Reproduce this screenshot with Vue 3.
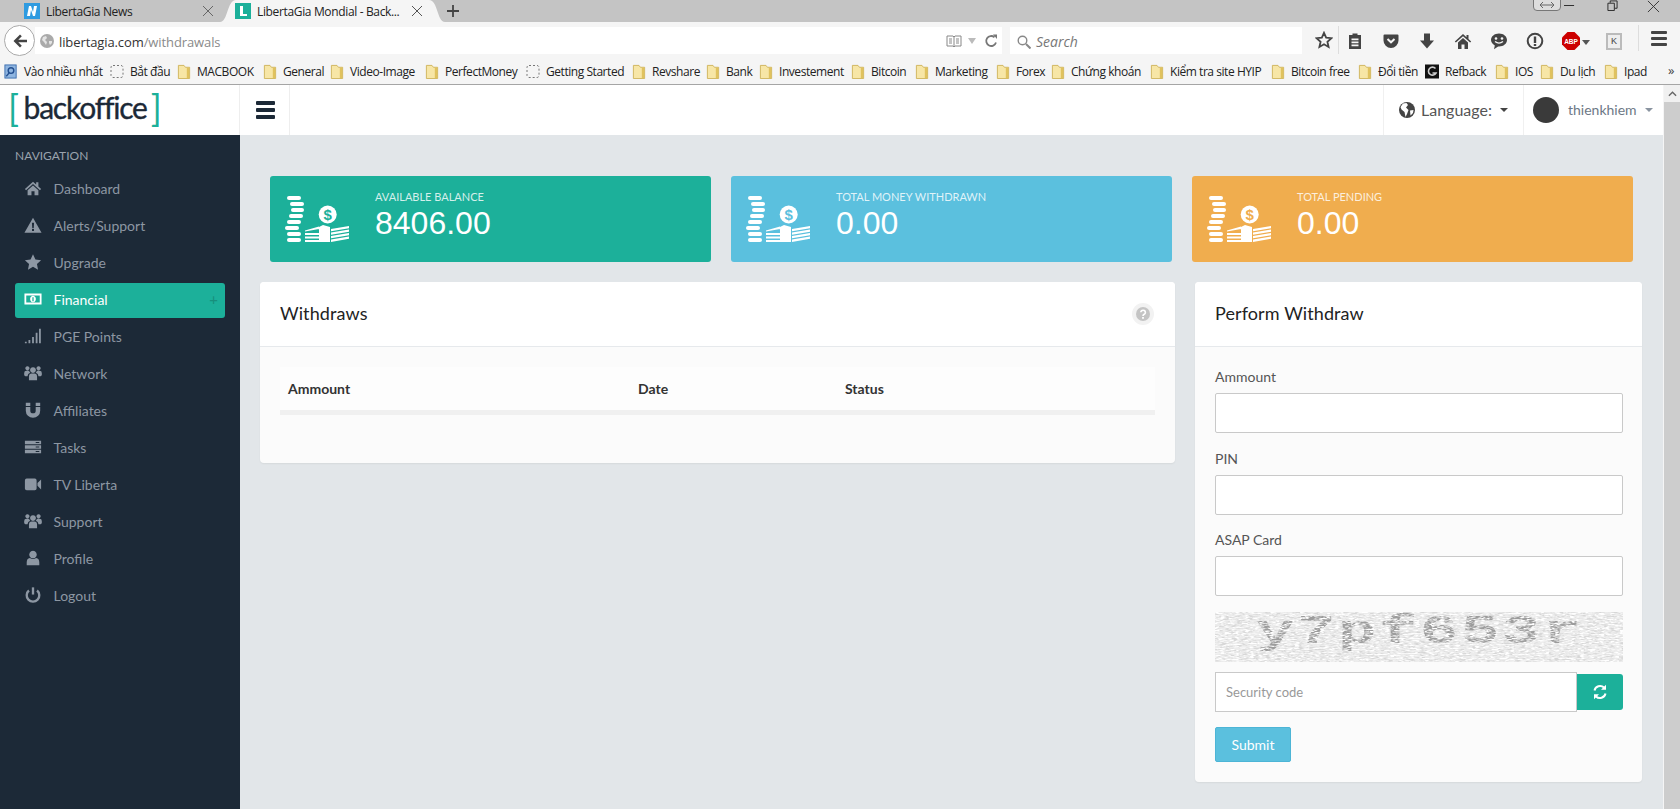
<script setup>
const bookmarks = [
  { t: 'Vào nhiều nhất', w: 106, i: 'most' },
  { t: 'Bắt đầu', w: 67, i: 'dash' },
  { t: 'MACBOOK', w: 86, i: 'f' },
  { t: 'General', w: 67, i: 'f' },
  { t: 'Video-Image', w: 95, i: 'f' },
  { t: 'PerfectMoney', w: 101, i: 'f' },
  { t: 'Getting Started', w: 106, i: 'dash' },
  { t: 'Revshare', w: 74, i: 'f' },
  { t: 'Bank', w: 53, i: 'f' },
  { t: 'Investement', w: 92, i: 'f' },
  { t: 'Bitcoin', w: 64, i: 'f' },
  { t: 'Marketing', w: 81, i: 'f' },
  { t: 'Forex', w: 55, i: 'f' },
  { t: 'Chứng khoán', w: 99, i: 'f' },
  { t: 'Kiểm tra site HYIP', w: 121, i: 'f' },
  { t: 'Bitcoin free', w: 87, i: 'f' },
  { t: 'Đổi tiền', w: 67, i: 'f' },
  { t: 'Refback', w: 70, i: 'g' },
  { t: 'IOS', w: 45, i: 'f' },
  { t: 'Du lịch', w: 64, i: 'f' },
  { t: 'Ipad', w: 50, i: 'f' }
]

const nav = [
  { t: 'Dashboard', d: 'M10 3 1 11l1.3 1.4L10 5.6l7.700 6.800L19 11l-3-2.700V3.500h-2.500v2.600ZM10 7.200l-6 5.200V18h4.300v-4.500h3.400V18H16v-5.600Z' },
  { t: 'Alerts/Support', d: 'M10 2 19.500 18.500H.5ZM8.800 7.500h2.400l-.4 6h-1.600ZM8.900 14.500h2.200v2.200H8.900Z' },
  { t: 'Upgrade', d: 'M10 1.500l2.700 5.700 6.300.8-4.600 4.300 1.200 6.200-5.600-3.100-5.600 3.100 1.200-6.200L1 8l6.300-.8Z' },
  { t: 'Financial', active: true, d: 'M.5 4h19v12H.5ZM2.500 6v8h15V6ZM10 6.300a3.200 3.700 0 1 1-.01 0ZM9.300 8v4.500h1.400V8Z' },
  { t: 'PGE Points', d: 'M1 16.500h2V18H1ZM5 14.500h2V18H5ZM9 11h2v7H9ZM13 6.500h2V18h-2ZM16.700 2h2v16h-2Z' },
  { t: 'Network', d: 'M10 3.500a3.200 3.200 0 1 1-.01 0ZM5.500 18v-4q0-3.500 3-3.500h3q3 0 3 3.500v4ZM3.800 2.500a2.300 2.300 0 1 1-.01 0ZM16.200 2.500a2.300 2.300 0 1 1-.01 0ZM.2 12.500V10q0-2.500 2.500-2.500h3q.3 1.500 1.300 2.300-3 .8-3.100 3.700H1.500ZM19.800 12.500V10q0-2.500-2.500-2.500h-3q-.3 1.500-1.300 2.300 3 .8 3.100 3.700h2.400Z' },
  { t: 'Affiliates', d: 'M2 2h5v3.500H2ZM13 2h5v3.500h-5ZM2 6.700h5v4a3 3 0 0 0 6 0v-4h5v4a8 8 0 0 1-16 0Z' },
  { t: 'Tasks', d: 'M1 3h18v4H1ZM1 8h18v4H1ZM1 13h18v4H1ZM13 9.500v1h4v-1ZM13 4.500v1h4v-1ZM13 14.500v1h4v-1Z' },
  { t: 'TV Liberta', d: 'M1 6a2 2 0 0 1 2-2h9a2 2 0 0 1 2 2v9a2 2 0 0 1-2 2H3a2 2 0 0 1-2-2ZM15 9l4-4v11l-4-4Z' },
  { t: 'Support', d: 'M10 3.500a3.200 3.200 0 1 1-.01 0ZM5.500 18v-4q0-3.500 3-3.500h3q3 0 3 3.500v4ZM3.800 2.500a2.300 2.300 0 1 1-.01 0ZM16.200 2.500a2.300 2.300 0 1 1-.01 0ZM.2 12.500V10q0-2.500 2.500-2.500h3q.3 1.500 1.300 2.300-3 .8-3.100 3.700H1.500ZM19.800 12.500V10q0-2.500-2.500-2.500h-3q-.3 1.500-1.300 2.300 3 .8 3.100 3.700h2.400Z' },
  { t: 'Profile', d: 'M10 2a4.200 4.200 0 1 1-.01 0ZM3 18v-3q0-4.500 3.500-5q3.500 2 7 0q3.500.5 3.500 5v3Z' },
  { t: 'Logout', power: true }
]

const stats = [
  { label: 'AVAILABLE BALANCE', value: '8406.00', cls: 'teal' },
  { label: 'TOTAL MONEY WITHDRAWN', value: '0.00', cls: 'blue' },
  { label: 'TOTAL PENDING', value: '0.00', cls: 'orange' }
]

const coins = [
  [2, 14], [5, 14], [6, 13], [4, 14], [2, 14], [0, 14], [2, 14], [2, 14]
]

const fields = ['Ammount', 'PIN', 'ASAP Card']
</script>

<template>
  <div class="page">
    <div class="tabs">
      <div class="tab">
        <svg class="fav" viewBox="0 0 16 16"><rect width="16" height="16" fill="#2f9be0"/><path d="M3 13 5 3h2l2 6 1-6h3l-2 10H9L7 7l-1 6Z" fill="#fff"/></svg>
        <span class="tab-title">LibertaGia News</span>
        <svg class="tab-x" viewBox="0 0 12 12"><path d="M1 1l10 10M11 1 1 11" stroke="#666" fill="none"/></svg>
      </div>
      <div class="tab active">
        <svg class="fav" viewBox="0 0 16 16"><rect width="16" height="16" fill="#1cb09a"/><path d="M5 3h3v8h4v2H5Z" fill="#fff"/></svg>
        <span class="tab-title">LibertaGia Mondial - Back...</span>
        <svg class="tab-x" viewBox="0 0 12 12"><path d="M1 1l10 10M11 1 1 11" stroke="#555" fill="none"/></svg>
      </div>
      <svg class="plus" viewBox="0 0 14 14"><path d="M7 1v12M1 7h12" stroke="#444" stroke-width="1.800" fill="none"/></svg>
      <div class="win">
        <span class="tray"><svg viewBox="0 0 16 8" width="16" height="8"><path d="M1 4h14M4 1 1 4l3 3M12 1l3 3-3 3" stroke="#666" fill="none"/></svg></span>
        <svg class="w-min" viewBox="0 0 12 12"><path d="M0 6h11" stroke="#222" fill="none"/></svg>
        <svg class="w-max" viewBox="0 0 12 12"><path d="M1 3.500h7v8H1ZM3.500 3V1h7.500v8H8.500" stroke="#222" fill="none"/></svg>
        <svg class="w-close" viewBox="0 0 14 14"><path d="M1 1l12 12M13 1 1 13" stroke="#333" fill="none"/></svg>
      </div>
    </div>

    <div class="toolbar">
      <div class="back"><svg viewBox="0 0 18 18" width="18" height="18"><path d="M9 2.500 2.500 9 9 15.500l1.800-1.800L7.300 10.300H16V7.700H7.300l3.500-3.400Z" fill="#444"/></svg></div>
      <div class="address">
        <svg class="globe-s" viewBox="0 0 14 14"><circle cx="7" cy="7" r="7" fill="#aaa"/><path d="M3 3l3-1 1 2-2 2 2 2-1 3-2-3-2-2ZM9 7l3 0 0 2-2 2-1-2Z" fill="#e4e4e4"/></svg>
        <span class="url"><span class="host">libertagia.com</span>/withdrawals</span>
        <svg class="reader" viewBox="0 0 16 14"><path d="M1 2h6l1 1 1-1h6v10H9l-1 1-1-1H1ZM8 3v9M3 5h3M3 7h3M3 9h3M10 5h3M10 7h3M10 9h3" stroke="#888" fill="none"/></svg>
        <svg class="drop" viewBox="0 0 8 6"><path d="M0 0h8L4 6Z" fill="#bbb"/></svg>
        <svg class="reload" viewBox="0 0 14 14"><path d="M12 8.500A5 5 0 1 1 10.500 3.200" stroke="#777" stroke-width="1.800" fill="none"/><path d="M9 .5h4v4.500Z" fill="#777"/></svg>
      </div>
      <div class="search">
        <svg viewBox="0 0 14 14" width="14" height="14"><circle cx="5.500" cy="5.500" r="4.300" stroke="#888" stroke-width="1.400" fill="none"/><path d="M9 9l4.500 4.500" stroke="#888" stroke-width="2" fill="none"/></svg>
        <span>Search</span>
      </div>
      <div class="star"><svg viewBox="0 0 20 20" width="18" height="18"><path d="M10 2l2.400 5.400 5.800.6-4.400 3.900 1.300 5.800L10 14.700l-5.100 3 1.300-5.800L1.800 8l5.800-.6Z" stroke="#444" stroke-width="2" fill="none"/></svg></div>
      <div class="tool first"><svg viewBox="0 0 18 18" width="18" height="18"><path d="M3 3h3.500V1.500h5V3H15v14H3ZM5.500 6.500v1.800h7V6.500ZM5.500 9.500v1.800h7V9.500ZM5.500 12.500v1.800h7v-1.800Z" fill="#444" fill-rule="evenodd"/></svg></div>
      <div class="tool"><svg viewBox="0 0 18 18" width="18" height="18"><path d="M2.500 2.500h13a1 1 0 0 1 1 1v5a7.500 7.500 0 0 1-15 0v-5a1 1 0 0 1 1-1Z" fill="#444"/><path d="M5.500 7l3.500 3.300L12.500 7" stroke="#f5f5f5" stroke-width="2" fill="none"/></svg></div>
      <div class="tool"><svg viewBox="0 0 18 18" width="18" height="18"><path d="M6 1.500h6v7h4L9 16.500 2 8.500h4Z" fill="#444"/></svg></div>
      <div class="tool"><svg viewBox="0 0 18 18" width="18" height="18"><path d="M9 2 .8 9.500l1.100 1L9 4.300l7.100 6.200 1.100-1-2.700-2.500V3h-2v2.200ZM9 6 4 10.500V17h3.500v-4.500h3V17H14v-6.500Z" fill="#444"/></svg></div>
      <div class="tool"><svg viewBox="0 0 18 18" width="18" height="18"><path d="M9 1.500c4.500 0 8 2.900 8 6.500s-3.500 6.500-8 6.500l-.9 0L4 17.200l.8-3.800C2.500 12.200 1 10.200 1 8c0-3.600 3.500-6.500 8-6.500Z" fill="#444"/><circle cx="6" cy="6.500" r="1.300" fill="#f5f5f5"/><circle cx="12" cy="6.500" r="1.300" fill="#f5f5f5"/><path d="M5 9.500q4 3.300 8 0" stroke="#f5f5f5" stroke-width="1.400" fill="none"/></svg></div>
      <div class="tool"><svg viewBox="0 0 18 18" width="18" height="18"><circle cx="9" cy="9" r="7.300" stroke="#444" stroke-width="2" fill="none"/><path d="M7.800 4.500h2.400v6.500H7.800ZM7.800 12h2.400v2H7.800Z" fill="#444"/></svg></div>
      <div class="tool abp"><svg viewBox="0 0 18 18" width="18" height="18"><path d="M5.500 0h7L18 5.500v7L12.500 18h-7L0 12.500v-7Z" fill="#c00"/><text x="9" y="11.600" text-anchor="middle" class="abp-t">ABP</text></svg><svg class="abp-c" viewBox="0 0 8 5"><path d="M0 0h8L4 5Z" fill="#555"/></svg></div>
      <div class="tool k"><span class="kbox">K</span></div>
      <div class="burger"><span></span><span></span><span></span></div>
    </div>

    <div class="bookmarks">
      <div v-for="b in bookmarks" :key="b.t" class="bm" :style="{ width: b.w + 'px' }">
        <svg v-if="b.i === 'f'" class="bi" viewBox="0 0 14 16"><path d="M1 1.500h6l1.500 2H13v12H1Z" fill="#f7e6a6" stroke="#cfb45c"/><path d="M10 4h2.500v11H10Z" fill="#e0c25e"/></svg>
        <svg v-else-if="b.i === 'dash'" class="bi" viewBox="0 0 14 14"><rect x="1" y="1" width="12" height="12" rx="2" fill="none" stroke="#777" stroke-dasharray="2 2"/></svg>
        <svg v-else-if="b.i === 'most'" class="bi" viewBox="0 0 14 16"><rect x=".5" y="1" width="12" height="14" fill="#8fb5e0" stroke="#3d6fb0"/><circle cx="7" cy="7" r="3" fill="none" stroke="#234f90" stroke-width="1.500"/><path d="M5 9.500 2 13" stroke="#234f90" stroke-width="1.500"/></svg>
        <svg v-else class="bi" viewBox="0 0 14 14"><rect width="14" height="14" fill="#111"/><path d="M10.500 4a4 4 0 1 0 .5 4.500H7.500" stroke="#ccc" stroke-width="1.600" fill="none"/></svg>
        <span>{{ b.t }}</span>
      </div>
      <span class="more">»</span>
    </div>

    <div class="viewport">
      <div class="site">
        <div class="logo"><span class="br">[</span><span class="lg">backoffice</span><span class="br">]</span></div>
        <header class="top">
          <div class="menu-btn"><span></span><span></span><span></span></div>
          <div class="spacer"></div>
          <div class="lang">
            <svg viewBox="0 0 16 16" width="16" height="16"><circle cx="8" cy="8" r="8" fill="#444"/><path d="M4 1.500 7.500 1 9 3 7 5.500 9.500 8 8 12 6.500 15 5.500 10 2.500 7.500 1.500 5ZM11 8.500l3.500-.5-.5 3-2.500 2.500Z" fill="#fff"/></svg>
            <span>Language:</span>
            <i class="caret dark"></i>
          </div>
          <div class="user">
            <span class="avatar"></span>
            <span class="uname">thienkhiem</span>
            <i class="caret"></i>
          </div>
        </header>
        <aside class="side">
          <div class="nav-title">NAVIGATION</div>
          <ul class="nav">
            <li v-for="n in nav" :key="n.t" :class="{ on: n.active }">
              <svg class="ni" viewBox="0 0 20 20">
                <g v-if="n.power" fill="none" stroke="currentColor" stroke-width="2.600">
                  <path d="M10 1.500v8"/><path d="M5.500 5a7 7 0 1 0 9 0"/>
                </g>
                <path v-else :d="n.d" fill="currentColor" fill-rule="evenodd"/>
              </svg>
              <span>{{ n.t }}</span>
              <em v-if="n.active">+</em>
            </li>
          </ul>
        </aside>
        <main class="content">
          <div class="stats">
            <div v-for="s in stats" :key="s.label" class="stat" :class="s.cls">
              <svg class="coin" viewBox="0 0 65 46">
                <rect v-for="(c, i) in coins" :key="i" :x="c[0]" :y="i * 6" :width="c[1]" height="4" rx="2" fill="#fff"/>
                <circle cx="42.700" cy="18.500" r="9" fill="#fff"/>
                <text x="42.700" y="23.500" text-anchor="middle" class="dollar" :class="s.cls">$</text>
                <path d="M20 34.500l14-4v2.500l-14 2.500ZM20 37h14v2H20ZM20 40.500h14v2H20ZM20 44h14v2H20ZM34 31l4-2 7 2v15H34ZM46 33l18-3v2.200l-18 3ZM46 36.500l18-3v2.200l-18 3ZM46 40l18-3v2.200l-18 3ZM46 43.500l18-3v2.200L46 46Z" fill="#fff"/>
              </svg>
              <div class="stat-text">
                <div class="stat-label">{{ s.label }}</div>
                <div class="stat-value">{{ s.value }}</div>
              </div>
            </div>
          </div>
          <div class="row">
            <section class="panel left">
              <div class="panel-head">
                <h3>Withdraws</h3>
                <span class="help"><svg viewBox="0 0 14 14" width="14" height="14"><circle cx="7" cy="7" r="7" fill="#c4c4c4"/><path d="M4.800 5.300a2.300 2.100 0 1 1 3.400 1.900C7.300 7.700 7 8 7 9" stroke="#fff" stroke-width="1.600" fill="none"/><path d="M6.100 10h1.800v1.700H6.100Z" fill="#fff"/></svg></span>
              </div>
              <div class="panel-body list">
                <table>
                  <thead>
                    <tr><th class="c1">Ammount</th><th class="c2">Date</th><th>Status</th></tr>
                  </thead>
                </table>
              </div>
            </section>
            <section class="panel right">
              <div class="panel-head"><h3>Perform Withdraw</h3></div>
              <form class="panel-body form" @submit.prevent>
                <div v-for="f in fields" :key="f" class="field">
                  <label>{{ f }}</label>
                  <input type="text" />
                </div>
                <svg class="captcha" viewBox="0 0 408 50" preserveAspectRatio="none">
                  <defs>
                    <filter id="nz" x="0" y="0" width="100%" height="100%">
                      <feTurbulence type="fractalNoise" baseFrequency="0.18 0.7" numOctaves="2" seed="4"/>
                      <feColorMatrix type="matrix" values="0 0 0 0 .68  0 0 0 0 .68  0 0 0 0 .68  3 3 0 0 -2.800"/>
                    </filter>
                    <filter id="nw" x="0" y="0" width="100%" height="100%">
                      <feTurbulence type="fractalNoise" baseFrequency="0.2 0.8" numOctaves="2" seed="11"/>
                      <feColorMatrix type="matrix" values="0 0 0 0 1  0 0 0 0 1  0 0 0 0 1  3 3 0 0 -2.900"/>
                    </filter>
                  </defs>
                  <rect width="408" height="50" fill="#ececec"/>
                  <text transform="translate(41 31) scale(1.600 1)" class="cap-t">y7pf653r</text>
                  <rect width="408" height="50" filter="url(#nz)"/>
                  <rect width="408" height="50" filter="url(#nw)"/>
                </svg>
                <div class="code">
                  <input type="text" placeholder="Security code" />
                  <button type="button" class="refresh"><svg viewBox="0 0 16 16" width="16" height="16"><path d="M2.500 6.500A5.700 5.700 0 0 1 12 3.500M13.500 9.500A5.700 5.700 0 0 1 4 12.500" stroke="#fff" stroke-width="2" fill="none"/><path d="M14 .8v5h-5ZM2 15.200v-5h5Z" fill="#fff"/></svg></button>
                </div>
                <button type="submit" class="submit">Submit</button>
              </form>
            </section>
          </div>
        </main>
      </div>
      <div class="scrollbar">
        <div class="sb-up"><svg viewBox="0 0 10 6" width="9" height="6"><path d="M1 5l4-4 4 4" stroke="#666" stroke-width="1.500" fill="none"/></svg></div>
        <div class="sb-thumb"></div>
      </div>
    </div>
  </div>
</template>

<style>
html, body { margin: 0; padding: 0; overflow: hidden; }
</style>

<style scoped>
.page { width: 1680px; height: 809px; display: flex; flex-direction: column; overflow: hidden; font-family: Lato, sans-serif; background: #f5f5f5; }

/* browser chrome */
.tabs { height: 22px; background: #c4c4c4; display: flex; position: relative; flex: none; font-family: "Open Sans", sans-serif; font-size: 12px; color: #222; }
.tab { display: flex; align-items: center; height: 22px; flex: none; }
.tab:first-child { width: 220px; padding-left: 24px; box-sizing: border-box; }
.tab.active { width: 225px; padding-left: 15px; box-sizing: border-box; background: #f5f5f5; clip-path: path('M0 22C8 22 7 0 16 0H209C218 0 217 22 225 22Z'); }
.fav { width: 16px; height: 16px; flex: none; }
.tab-title { margin-left: 6px; letter-spacing: -.35px; white-space: nowrap; flex: 1; }
.tab-x { width: 12px; height: 12px; margin-right: 6px; flex: none; }
.tab.active .tab-x { margin-right: 22px; }
.plus { width: 14px; height: 14px; margin: 4px 0 0 1px; flex: none; }
.win { margin-left: auto; position: relative; width: 150px; }
.tray { position: absolute; left: 3px; top: -1px; width: 28px; height: 12px; box-sizing: border-box; border: 1px solid #777; border-radius: 0 0 4px 4px; background: #ddd; display: flex; align-items: center; justify-content: center; }
.w-min, .w-max, .w-close { position: absolute; top: 0; }
.w-min { left: 34px; width: 11px; height: 11px; }
.w-max { left: 77px; width: 11px; height: 11px; }
.w-close { left: 117px; width: 13px; height: 13px; }

.toolbar { height: 32px; display: flex; flex: none; background: #f5f5f5; position: relative; }
.back { width: 31px; height: 31px; margin: 3px 0 0 4px; box-sizing: border-box; border: 1px solid #aaa; border-radius: 50%; background: #fff; display: flex; align-items: center; justify-content: center; position: relative; z-index: 1; flex: none; }
.address { width: 967px; height: 27px; margin: 5px 0 0 0; background: #fff; display: flex; align-items: center; box-sizing: border-box; padding-left: 4px; flex: none; font-family: "Open Sans", sans-serif; }
.globe-s { width: 14px; height: 14px; margin-left: 1px; flex: none; }
.url { margin-left: 5px; font-size: 13px; line-height: 18px; padding-top: 2px; color: #8a8a8a; letter-spacing: -.1px; flex: 1; }
.host { color: #333; }
.reader { width: 16px; height: 14px; flex: none; }
.drop { width: 8px; height: 6px; margin: 0 8px 0 6px; flex: none; }
.reload { width: 14px; height: 14px; margin-right: 4px; flex: none; }
.search { width: 292px; height: 27px; margin: 5px 0 0 8px; background: #fff; display: flex; align-items: center; gap: 5px; padding: 2px 0 0 7px; box-sizing: border-box; color: #777; font: italic 14px "Open Sans", sans-serif; flex: none; }
.star { width: 30px; height: 28px; margin: 4px 0 0 7px; display: flex; align-items: center; justify-content: center; box-sizing: border-box; border-right: 1px solid #ddd; flex: none; }
.tool { width: 36px; height: 32px; margin-top: 3px; display: flex; align-items: center; justify-content: center; flex: none; position: relative; }
.tool.first { margin-left: -2px; }
.abp-t { font: bold 6.500px "Liberation Sans", sans-serif; fill: #fff; }
.abp-c { position: absolute; right: -1px; top: 15px; width: 8px; height: 5px; }
.tool.k { margin-left: 7px; }
.kbox { width: 16px; height: 17px; box-sizing: border-box; border: 2px solid #bbb; background: #eee; font: 9px "Liberation Sans", sans-serif; color: #444; display: flex; align-items: center; justify-content: center; }
.burger { width: 40px; margin: 3px 0 3px 6px; border-left: 1px solid #ddd; box-sizing: border-box; display: flex; flex-direction: column; justify-content: center; align-items: center; gap: 3px; flex: none; }
.burger span { width: 16px; height: 3px; background: #444; border-radius: 1px; }

.bookmarks { height: 31px; box-sizing: border-box; padding: 5px 0 0 4px; border-bottom: 1px solid #a5a5a5; background: #f5f5f5; display: flex; align-items: center; flex: none; font: 12px "Open Sans", sans-serif; color: #222; position: relative; }
.bm { display: flex; align-items: center; flex: none; white-space: nowrap; letter-spacing: -.45px; }
.bm span { margin-left: 6px; }
.bi { width: 14px; height: 15px; flex: none; }
.more { position: absolute; left: 1668px; top: 7px; font-size: 13px; color: #444; }

/* page */
.viewport { flex: 1; display: flex; min-height: 0; }
.site { width: 1663px; margin-right: 1px; background: #e2e6e9; display: grid; grid-template-columns: 240px 1fr; grid-template-rows: 50px 1fr; }
.logo { background: #fff; display: flex; align-items: center; padding-left: 8px; box-sizing: border-box; border-right: 1px solid #eee; }
.lg { font-size: 30px; color: #1c2937; letter-spacing: -1.200px; margin: 0 4px 0 4.500px; position: relative; top: -3px; line-height: 50px; -webkit-text-stroke: .35px #1c2937; }
.br { font-size: 36px; font-weight: 400; color: #1cb09a; position: relative; top: -2px; line-height: 50px; }
.top { background: #fff; display: flex; align-items: stretch; }
.menu-btn { width: 50px; box-sizing: border-box; border-right: 1px solid #eee; display: flex; flex-direction: column; justify-content: center; align-items: center; gap: 3px; padding-left: 1px; }
.menu-btn span { width: 19px; height: 4px; background: #1c2937; border-radius: 1px; }
.spacer { flex: 1; }
.lang { width: 140px; box-sizing: border-box; border-left: 1px solid #f0f0f0; display: flex; align-items: center; padding-left: 15px; font-size: 16px; color: #555; }
.lang span { margin-left: 6px; padding-bottom: 2px; }
.caret { display: inline-block; width: 0; height: 0; border: 4px solid transparent; border-top-color: #8a94a0; border-bottom: 0; margin-left: 8px; }
.caret.dark { border-top-color: #444; margin-left: 8px; }
.user { width: 140px; box-sizing: border-box; border-left: 1px solid #f0f0f0; display: flex; align-items: center; padding-left: 9px; font-size: 14px; color: #6d7885; }
.avatar { width: 26px; height: 26px; border-radius: 50%; background: #3a3a3a; }
.uname { margin-left: 9px; padding-bottom: 2px; }

.side { background: #1c2937; color: #8d97a3; }
.nav-title { font-size: 12px; color: #9aa3ad; margin: 13px 0 0 15px; line-height: 15px; }
.nav { list-style: none; margin: 9px 0 0 15px; padding: 0; width: 210px; }
.nav li { height: 35px; margin-bottom: 2px; display: flex; align-items: center; border-radius: 3px; padding: 0 0 3px 9px; font-size: 14px; box-sizing: border-box; position: relative; }
.nav li.on { background: #1cb09a; color: #fff; }
.nav li.on em { position: absolute; right: 7px; top: 7px; font-style: normal; font-size: 15px; color: #178f7c; }
.ni { width: 18px; height: 18px; flex: none; }
.nav li span { margin-left: 11.500px; }

.content { min-width: 0; }
.stats { display: flex; gap: 20px; padding: 41px 0 0 30px; }
.stat { width: 441px; height: 86px; border-radius: 3px; display: flex; color: #fff; box-sizing: border-box; padding: 20px 0 0 15px; flex: none; }
.teal { background: #1cb09a; }
.blue { background: #5bc0de; }
.orange { background: #f0ad4e; }
.coin { width: 65px; height: 46px; flex: none; }
.dollar { font: bold 15px "Liberation Sans", sans-serif; background: none; }
.dollar.teal { fill: #1cb09a; }
.dollar.blue { fill: #5bc0de; }
.dollar.orange { fill: #f0ad4e; }
.stat-text { margin-left: 25px; margin-top: -7px; }
.stat-label { font-size: 11px; line-height: 16px; color: rgba(255, 255, 255, .82); }
.stat-value { font: 32px/36px "Liberation Sans", sans-serif; }

.row { display: flex; gap: 20px; padding: 20px 0 0 20px; align-items: flex-start; }
.panel { background: #fbfbfb; border-radius: 4px; box-shadow: 0 1px 2px rgba(0, 0, 0, .06); box-sizing: border-box; flex: none; }
.panel.left { width: 915px; height: 181px; }
.panel.right { width: 447px; height: 500px; }
.panel-head { height: 65px; box-sizing: border-box; background: #fff; border-bottom: 1px solid #e6e9ec; border-radius: 4px 4px 0 0; display: flex; align-items: center; justify-content: space-between; padding: 0 20px; }
h3 { margin: 0 0 3px; font-size: 18px; font-weight: 400; color: #222; letter-spacing: .1px; }
.help { width: 22px; height: 22px; border-radius: 50%; background: #f2f2f2; display: flex; align-items: center; justify-content: center; margin-right: 1px; }
.list { padding: 20px 20px 0; }
table { width: 100%; border-collapse: collapse; background: #fdfdfd; }
th { height: 43px; padding: 0 8px; text-align: left; font-size: 14px; font-weight: 700; color: #333; border-bottom: 5px solid #f0f0f0; }
th.c1 { width: 334px; }
th.c2 { width: 191px; }

.form { padding: 20px 19px 0 20px; display: flex; flex-direction: column; }
.field { display: flex; flex-direction: column; margin-bottom: 15.500px; }
.field label { font-size: 14px; line-height: 20px; color: #555; margin-bottom: 6px; }
input { height: 40px; box-sizing: border-box; border: 1px solid #c9c9c9; border-radius: 2px; background: #fff; outline: none; font: 13px Lato, sans-serif; padding: 0 10px; }
input::placeholder { color: #999; opacity: 1; }
.captcha { width: 408px; height: 50px; display: block; overflow: visible; }
.cap-t { font: bold 40px "Liberation Mono", monospace; letter-spacing: 1.600px; fill: #9c9c9c; }
.code { display: flex; align-items: center; margin-top: 10px; }
.code input { width: 362px; flex: none; border-radius: 0; }
.refresh { width: 46px; height: 36px; border: 0; border-radius: 0 3px 3px 0; background: #1cb09a; padding: 0; display: flex; align-items: center; justify-content: center; }
.submit { width: 76px; height: 35px; margin-top: 15px; border: 1px solid #4db5d6; border-radius: 2px; background: #5bc0de; color: #fff; font: 14px Lato, sans-serif; padding: 0; }

.scrollbar { width: 16px; display: flex; flex-direction: column; background: #f0f0f0; }
.sb-up { height: 17px; display: flex; align-items: center; justify-content: center; }
.sb-thumb { flex: 1; background: #cdcdcd; }
</style>
